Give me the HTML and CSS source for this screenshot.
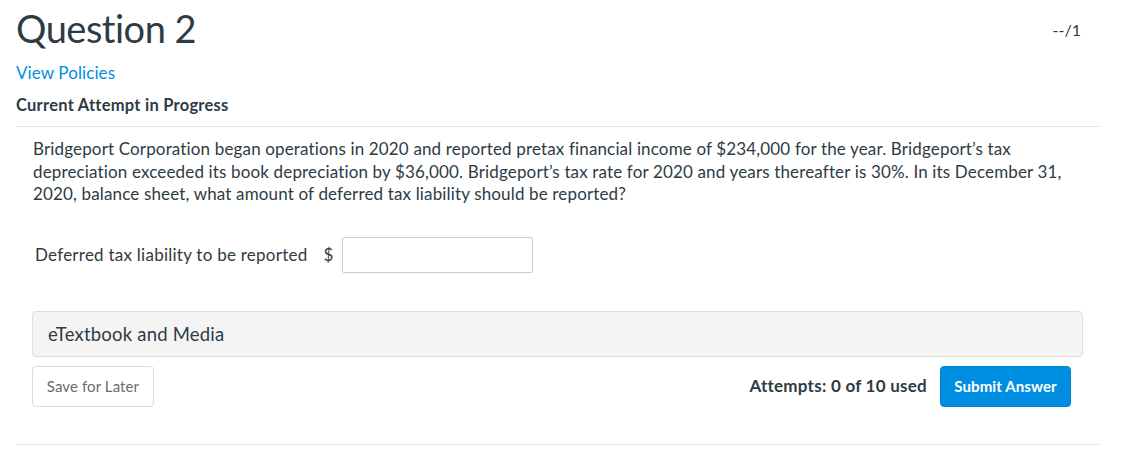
FILE: index.html
```html
<!DOCTYPE html>
<html lang="en">
<head>
<meta charset="utf-8">
<title>Question 2</title>
<link rel="stylesheet" href="styles.css">
</head>
<body>
<div class="page">
  <header class="q-header">
    <h1 class="q-title">Question 2</h1>
    <div class="q-score">--/1</div>
  </header>
  <a class="policies" href="#">View Policies</a>
  <div class="attempt-label">Current Attempt in Progress</div>
  <div class="q-body">
    <p class="q-text">Bridgeport Corporation began operations in 2020 and reported pretax financial income of $234,000 for the year. Bridgeport’s tax depreciation exceeded its book depreciation by $36,000. Bridgeport’s tax rate for 2020 and years thereafter is 30%. In its December 31, 2020, balance sheet, what amount of deferred tax liability should be reported?</p>
    <div class="answer-row">
      <span class="answer-label">Deferred tax liability to be reported</span>
      <span class="currency">$</span>
      <input class="answer-input" type="text">
    </div>
    <div class="media-bar">eTextbook and Media</div>
    <div class="actions">
      <button class="btn btn-save">Save for Later</button>
      <div class="submit-group">
        <span class="attempts">Attempts: 0 of 10 used</span>
        <button class="btn btn-submit">Submit Answer</button>
      </div>
    </div>
  </div>
</div>
</body>
</html>
```
FILE: styles.css
```css
* { box-sizing: border-box; }
body {
  margin: 0;
  font-family: Lato, "Open Sans", sans-serif;
  font-variant-ligatures: none;
  font-size: 17px;
  letter-spacing: 0.25px;
  color: #2d3b45;
  background: #fff;
}
.page {
  width: 1100px;
  padding: 0 0 0 16px;
}
.q-header {
  display: flex;
  justify-content: space-between;
  align-items: flex-start;
  padding-right: 19px;
}
.q-title {
  margin: 0;
  padding-top: 5px;
  font-size: 38px;
  font-weight: 400;
  letter-spacing: -0.5px;
  line-height: 46px;
}
.q-score {
  padding-top: 20px;
  font-size: 16px;
  letter-spacing: 0;
  line-height: 20px;
}
.policies {
  display: block;
  margin-top: 11px;
  font-size: 17px;
  letter-spacing: 0.1px;
  line-height: 22px;
  color: #008ee2;
  text-decoration: none;
}
.attempt-label {
  margin-top: 10px;
  font-size: 16.5px;
  font-weight: 700;
  line-height: 22px;
  padding-bottom: 10px;
  border-bottom: 1px solid #e8e8e8;
}
.q-body {
  padding: 0 1px 10px 16px;
  border-bottom: 1px solid #e8e8e8;
}
.q-body > * { margin-right: 16px; }
.q-text {
  margin: 11px 16px 0 1px;
  letter-spacing: 0.15px;
  line-height: 22.5px;
}
.answer-row {
  display: flex;
  align-items: center;
  margin-top: 31px;
  padding-left: 3px;
}
.currency {
  margin-left: 16px;
}
.answer-input {
  margin-left: 8px;
  width: 191px;
  height: 36px;
  border: 1px solid #c7cdd1;
  border-radius: 2px;
  font: inherit;
}
.media-bar {
  margin-top: 38px;
  height: 46px;
  display: flex;
  align-items: center;
  padding-left: 15px;
  background: #f4f4f4;
  border: 1px solid #dedede;
  border-radius: 4px;
  font-size: 18.5px;
  letter-spacing: 0.2px;
}
.actions {
  display: flex;
  justify-content: space-between;
  align-items: center;
  margin-top: 9px;
  margin-bottom: 27px;
}
.btn {
  height: 41px;
  border-radius: 4px;
  font-family: inherit;
  font-variant-ligatures: none;
  font-size: 15px;
  letter-spacing: 0.1px;
}
.btn-save {
  width: 122px;
  background: #fff;
  border: 1px solid #dcdcdc;
  color: #6b6b6b;
}
.submit-group {
  display: flex;
  align-items: center;
  margin-right: 12px;
}
.attempts {
  font-weight: 700;
  margin-right: 13px;
  padding-bottom: 2px;
}
.btn-submit {
  width: 131px;
  background: #008ee2;
  border: 1px solid #0082cf;
  color: #fff;
  font-weight: 700;
}
```
